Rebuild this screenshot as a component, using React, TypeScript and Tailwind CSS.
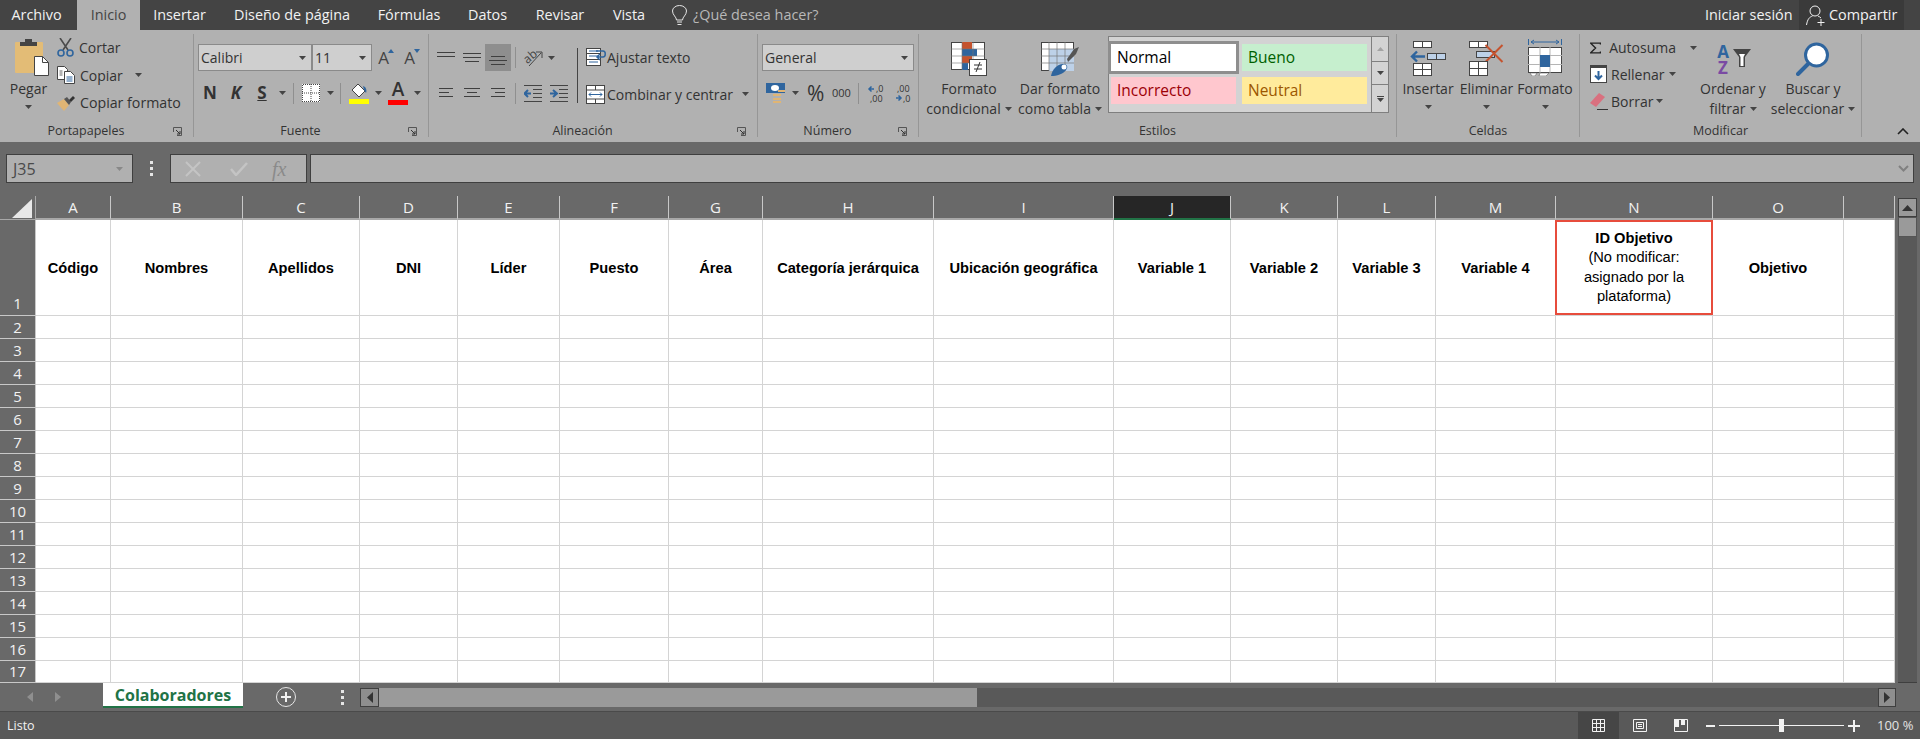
import type { ReactNode } from 'react'

const tabs = [
  ['Archivo', 'w-[77px] pr-[4px]'],
  ['Inicio', 'w-[63px] bg-[#b1b1b1] text-[#444]'],
  ['Insertar', 'w-[79px]'],
  ['Diseño de página', 'w-[146px]'],
  ['Fórmulas', 'w-[88px]'],
  ['Datos', 'w-[69px]'],
  ['Revisar', 'w-[76px]'],
  ['Vista', 'w-[62px]'],
]

const columns = ['A', 'B', 'C', 'D', 'E', 'F', 'G', 'H', 'I', 'J', 'K', 'L', 'M', 'N', 'O', '']
const titles = ['Código', 'Nombres', 'Apellidos', 'DNI', 'Líder', 'Puesto', 'Área', 'Categoría jerárquica', 'Ubicación geográfica', 'Variable 1', 'Variable 2', 'Variable 3', 'Variable 4', '', 'Objetivo', '']
const rows = [2, 3, 4, 5, 6, 7, 8, 9, 10, 11, 12, 13, 14, 15, 16, 17]

function Caret({ fill = '#444' }: { fill?: string }) {
  return (
    <svg width="7" height="4" viewBox="0 0 7 4" className="shrink-0">
      <path d="M0 0h7L3.5 4z" fill={fill} />
    </svg>
  )
}

function CaretBox({ w }: { w: string }) {
  return (
    <div className={`${w} flex justify-center`}>
      <Caret />
    </div>
  )
}

function Launcher() {
  return (
    <svg width="9" height="9" viewBox="0 0 9 9" className="shrink-0">
      <path d="M.5 5V.5H8.500V8.500H4" fill="none" stroke="#555" />
      <path d="M3 3l4 4M7 4v3H4" fill="none" stroke="#333" />
    </svg>
  )
}

function Sep() {
  return <div className="h-[21px] w-px shrink-0 bg-[#8f8f8f]" />
}

function Group({ w, label, launcher, children }: { w: string; label: string; launcher?: boolean; children: ReactNode }) {
  return (
    <div className={`${w} mt-1 flex h-[103px] shrink-0 flex-col border-r border-[#969696]`}>
      <div className="flex h-[92px]">{children}</div>
      <div className="flex h-[11px] items-center text-[12.500px] text-[#333]">
        <span className="flex-1 text-center">{label}</span>
        {launcher && (
          <span className="flex w-[21px] justify-start pl-[1px]">
            <Launcher />
          </span>
        )}
      </div>
    </div>
  )
}

function BigButton({ w, icon, lines, caretInline }: { w: string; icon: ReactNode; lines: string[]; caretInline?: boolean }) {
  return (
    <div className={`${w} flex shrink-0 flex-col items-center`}>
      <div className="mt-[5px] flex h-[37px] items-end justify-center">{icon}</div>
      <div className="mt-[3px] text-[14px] leading-[20px] text-[#333]">
        <div className="whitespace-nowrap text-center">{lines[0]}</div>
        {caretInline ? (
          <div className="flex items-center justify-center gap-[4px] whitespace-nowrap">
            {lines[1]}
            <Caret />
          </div>
        ) : (
          <div className="flex h-[16px] items-center justify-center">
            <Caret />
          </div>
        )}
      </div>
    </div>
  )
}

function SelectBox({ w, text }: { w: string; text: string }) {
  return (
    <div className={`${w} flex h-[27px] items-center justify-between border border-[#8a8a8a] bg-[#cfcfcf] pl-[2px] pr-[5px] text-[14px] text-[#333]`}>
      <span>{text}</span>
      <Caret />
    </div>
  )
}

function Lines({ ys, xs }: { ys: number[]; xs: [number, number][] }) {
  return (
    <svg width="18" height="16" viewBox="0 0 18 16">
      {ys.map((y, i) => (
        <path key={y} d={`M${xs[i][0]} ${y + 0.5}H${xs[i][1]}`} stroke="#3f3f3f" />
      ))}
    </svg>
  )
}

function Paste() {
  return (
    <svg width="34" height="38" viewBox="0 0 34 38">
      <rect x="0" y="4" width="28" height="31" rx="1" fill="#e3bc76" />
      <path d="M5 8V4h5V1h7v3h5v4z" fill="#444" />
      <path d="M19.500 18.500h8l6 6v13h-14z" fill="#fff" stroke="#444" />
      <path d="M27.500 18.500v6h6" fill="none" stroke="#444" />
    </svg>
  )
}

function Scissors() {
  return (
    <svg width="17" height="19" viewBox="0 0 17 19">
      <path d="M3 0l8 12M14 0L6 12" stroke="#4b4b4b" strokeWidth="1.600" fill="none" />
      <circle cx="4" cy="15" r="3" fill="none" stroke="#2f659e" strokeWidth="1.600" />
      <circle cx="13" cy="15" r="3" fill="none" stroke="#2f659e" strokeWidth="1.600" />
    </svg>
  )
}

function CopyIcon() {
  return (
    <svg width="18" height="18" viewBox="0 0 18 18">
      <path d="M.5.5h7l3 3v10H.5z" fill="#fff" stroke="#444" />
      <path d="M7.500 5.500h6l4 4v8h-10z" fill="#fff" stroke="#444" />
      <path d="M9.500 11h6M9.500 13h6M9.500 15h6" stroke="#2f659e" />
      <path d="M2.500 5h3M2.500 7h3M2.500 9h3" stroke="#666" />
    </svg>
  )
}

function Brush() {
  return (
    <svg width="18" height="16" viewBox="0 0 18 16">
      <path d="M0 8l7-4 5 6-5 6z" fill="#e0b574" />
      <path d="M7 4l3-2 4 5-2 3z" fill="#555" />
      <path d="M12 5l4-4 2 2-4 4z" fill="#333" />
    </svg>
  )
}

function BorderIcon() {
  return (
    <svg width="18" height="18" viewBox="0 0 18 18">
      <rect width="18" height="18" fill="#fff" />
      <path d="M.5 18V.5H18M17.500 0v18M0 17.500h18" fill="none" stroke="#444" strokeDasharray="1 1" />
      <path d="M9 0v18M0 9h18" stroke="#444" strokeDasharray="1 1" />
    </svg>
  )
}

function FillIcon() {
  return (
    <svg width="20" height="21" viewBox="0 0 20 21">
      <path d="M9 1l7 7-6 6-7-7z" fill="#fff" stroke="#444" />
      <path d="M14 3c3 1 4 4 3 7l-2-3z" fill="#2f659e" />
      <rect y="16" width="20" height="5" fill="#ffff00" />
    </svg>
  )
}

function FontColor() {
  return (
    <div className="flex w-[20px] flex-col items-center">
      <span className="h-[17px] text-[19px] font-semibold leading-[17px] text-[#333]">A</span>
      <span className="mt-[2px] h-[5px] w-[20px] bg-[#ff0000]" />
    </div>
  )
}

function Grow({ up }: { up?: boolean }) {
  return (
    <div className="flex w-[26px] items-start justify-center">
      <span className="text-[17px] leading-[20px] text-[#444]">A</span>
      <svg width="6" height="4" viewBox="0 0 6 4" className="-ml-[1px] mt-[1px]">
        <path d={up ? 'M0 4h6L3 0z' : 'M0 0h6L3 4z'} fill="#2f659e" />
      </svg>
    </div>
  )
}

function Orientation() {
  return (
    <svg width="19" height="19" viewBox="0 0 19 19" className="overflow-visible">
      <text x="0" y="13" fontSize="12" fill="#444" transform="rotate(-40 6 10)" fontFamily="Open Sans">ab</text>
      <path d="M5 18L17 5M12 4h6v6" fill="none" stroke="#444" />
    </svg>
  )
}

function Indent({ flip }: { flip?: boolean }) {
  return (
    <svg width="18" height="17" viewBox="0 0 18 17">
      {flip ? (
        <>
          <path d="M0 8.500h6M3 5l4 3.500L3 12" fill="none" stroke="#2f659e" strokeWidth="2" />
          <path d="M0 .5h18M9 4.500h9M9 8.500h9M9 12.500h9M0 16.500h18" stroke="#444" />
        </>
      ) : (
        <>
          <path d="M7 8.500H1M4 5L.5 8.500 4 12" fill="none" stroke="#2f659e" strokeWidth="2" />
          <path d="M0 .5h18M9 4.500h9M9 8.500h9M9 12.500h9M0 16.500h18" stroke="#444" />
        </>
      )}
    </svg>
  )
}

function Wrap() {
  return (
    <svg width="20" height="18" viewBox="0 0 20 18">
      <rect x=".5" y=".5" width="14" height="17" fill="#fff" stroke="#444" />
      <path d="M.5 5.500h14M.5 11.500h14" stroke="#444" />
      <path d="M3 3h9M3 8h9M3 14h9" stroke="#2f659e" />
      <path d="M10 3h7c3 0 3 6 0 6h-5M14 6l-3 3 3 3" fill="none" stroke="#2f659e" strokeWidth="1.500" />
    </svg>
  )
}

function Merge() {
  return (
    <svg width="19" height="19" viewBox="0 0 19 19">
      <rect x=".5" y=".5" width="18" height="18" fill="#fff" stroke="#444" />
      <path d="M.5 5h18M.5 14h18M9.500 0v5M9.500 14v5" stroke="#444" />
      <path d="M3 9.500h13M5 7.500l-2 2 2 2M14 7.500l2 2-2 2" fill="none" stroke="#2f659e" />
    </svg>
  )
}

function Currency() {
  return (
    <svg width="19" height="20" viewBox="0 0 19 20">
      <rect width="19" height="10" fill="#2f659e" />
      <ellipse cx="9" cy="5" rx="4" ry="3" fill="#fff" />
      <path d="M7 11h8v2H7zM7 15h8v2H7zM7 18h8v2H7zM12 7h7v2h-7z" fill="#e0b574" />
    </svg>
  )
}

function Decimal({ more }: { more?: boolean }) {
  return (
    <svg width="17" height="19" viewBox="0 0 17 19" className="overflow-visible">
      {more ? (
        <>
          <path d="M6 5H1M3.500 2.500L1 5l2.500 2.500" fill="none" stroke="#2f659e" strokeWidth="1.500" />
          <text x="8" y="8" fontSize="9" fill="#333" fontFamily="Open Sans">,0</text>
          <text x="2" y="18" fontSize="9" fill="#333" fontFamily="Open Sans">,00</text>
        </>
      ) : (
        <>
          <text x="2" y="8" fontSize="9" fill="#333" fontFamily="Open Sans">,00</text>
          <path d="M1 14h5M3.500 11.500L6 14l-2.500 2.500" fill="none" stroke="#2f659e" strokeWidth="1.500" />
          <text x="8" y="18" fontSize="9" fill="#333" fontFamily="Open Sans">,0</text>
        </>
      )}
    </svg>
  )
}

function CondFormat() {
  return (
    <svg width="36" height="34" viewBox="0 0 36 34">
      <rect x=".5" y=".5" width="33" height="27" fill="#fff" stroke="#444" />
      <path d="M11 0h10v7H11z" fill="#c5532e" />
      <path d="M11 7h15v7H11z" fill="#2f659e" />
      <path d="M11 14h10v7H11z" fill="#c5532e" />
      <path d="M11 21h6v7h-6z" fill="#2f659e" />
      <path d="M0 7h34M0 14h34M0 21h34M11 0v28M22 0v28" stroke="#777" strokeWidth=".6" />
      <rect x="18.500" y="17.500" width="17" height="16" fill="#fff" stroke="#444" />
      <path d="M23 23h8M23 27h8M29 20l-4 10" stroke="#333" fill="none" />
    </svg>
  )
}

function TableFormat() {
  return (
    <svg width="38" height="34" viewBox="0 0 38 34">
      <rect x=".5" y=".5" width="32" height="28" fill="#fff" stroke="#444" />
      <rect x="8" y="7" width="25" height="22" fill="#bdd1e8" />
      <path d="M0 7h33M0 14h33M0 21h33M8 0v29M16 0v29M24 0v29" stroke="#777" strokeWidth=".7" />
      <path d="M26 17l7-10 5-2-3 7-8 8z" fill="#555" />
      <path d="M10 34c1-6 6-12 12-12 3 0 6 2 3 6-3 4-9 6-15 6z" fill="#2f659e" />
      <circle cx="23" cy="25" r="2.500" fill="#fff" />
    </svg>
  )
}

function InsertCells() {
  return (
    <svg width="36" height="35" viewBox="0 0 36 35">
      <rect x="3.500" y=".5" width="18" height="6" fill="#fff" stroke="#444" />
      <path d="M12.500 0v6" stroke="#444" />
      <rect x="17.500" y="12.500" width="18" height="6" fill="#bdd1e8" stroke="#444" />
      <path d="M26.500 12v7" stroke="#444" />
      <path d="M15 15.500H2M7 10.500l-5 5 5 5" fill="none" stroke="#2f659e" strokeWidth="2.400" />
      <rect x="3.500" y="22.500" width="18" height="12" fill="#fff" stroke="#444" />
      <path d="M3 28.500h18M12.500 22v12" stroke="#444" />
    </svg>
  )
}

function DeleteCells() {
  return (
    <svg width="36" height="35" viewBox="0 0 36 35">
      <rect x=".5" y=".5" width="18" height="6" fill="#fff" stroke="#444" />
      <path d="M9.500 0v6" stroke="#444" />
      <rect x="7.500" y="10.500" width="18" height="6" fill="#bdd1e8" stroke="#444" />
      <path d="M17.500 4l17 17M34.500 4l-17 17" transform="translate(-1 0)" stroke="#c5532e" strokeWidth="2" />
      <rect x=".5" y="20.500" width="18" height="14" fill="#fff" stroke="#444" />
      <path d="M0 27.500h18M9.500 20v14" stroke="#444" />
    </svg>
  )
}

function FormatCells() {
  return (
    <svg width="34" height="37" viewBox="0 0 34 37">
      <path d="M.5 0v6M33.500 0v6" stroke="#2f659e" />
      <path d="M3 3h28M6 1L3 3l3 2M28 1l3 2-3 2" fill="none" stroke="#2f659e" />
      <rect x=".5" y="8.500" width="33" height="25" fill="#fff" stroke="#444" />
      <path d="M0 16.500h34M0 25.500h34M12 8v26M22 8v26" stroke="#b5b5b5" />
      <rect x="12" y="16" width="10" height="12" fill="#2f659e" />
      <path d="M2 34h7l-2 3H4zM12 34h9l-3 3h-7z" fill="#fff" stroke="#666" strokeWidth=".6" />
    </svg>
  )
}

function Sigma() {
  return (
    <svg width="16" height="16" viewBox="0 0 16 16">
      <path d="M15 3V1H1l7 7-7 7h14v-2" fill="none" stroke="#222" strokeWidth="2" />
    </svg>
  )
}

function FillDown() {
  return (
    <svg width="17" height="18" viewBox="0 0 17 18">
      <rect x=".5" y=".5" width="16" height="17" fill="#fff" stroke="#444" />
      <rect width="17" height="3" fill="#444" />
      <path d="M8.500 6v8M5 10.500l3.500 3.500 3.500-3.500" fill="none" stroke="#2f659e" strokeWidth="2" />
    </svg>
  )
}

function Eraser() {
  return (
    <svg width="18" height="18" viewBox="0 0 18 18">
      <path d="M0 11l9-10 6 4-9 10z" fill="#d9707f" />
      <path d="M7 17.500h11" stroke="#333" />
    </svg>
  )
}

function SortFilter() {
  return (
    <div className="flex h-[33px] items-end">
      <div className="flex w-[15px] flex-col items-center text-[17px] font-bold leading-[16px]">
        <span className="text-[#2f659e]">A</span>
        <span className="text-[#7a4aa3]">Z</span>
      </div>
      <svg width="18" height="18" viewBox="0 0 18 18" className="mb-[9px] ml-[2px]">
        <path d="M0 0h18l-6 8v10H6V8z" fill="#444" />
        <path d="M6 5h6l-1.500 3v9h-3V8z" fill="#fff" />
      </svg>
    </div>
  )
}

function Lens() {
  return (
    <svg width="34" height="34" viewBox="0 0 34 34">
      <circle cx="20.500" cy="13" r="11" fill="#fff" stroke="#2f659e" strokeWidth="3" />
      <path d="M12 22L2 32" stroke="#2f659e" strokeWidth="4" strokeLinecap="round" />
    </svg>
  )
}

function Corner() {
  return (
    <div className="flex h-full items-end justify-end border-r border-b border-[#a8a8a8] pb-[1px] pr-[3px]">
      <svg width="20" height="19" viewBox="0 0 20 19">
        <path d="M20 0v19H0z" fill="#e8e8e8" />
      </svg>
    </div>
  )
}

export default function App() {
  return (
    <div className="flex h-[739px] w-[1920px] flex-col overflow-hidden bg-[#696969] font-['Open_Sans',sans-serif] text-[14px]">
      {/* Title tabs */}
      <div className="flex h-[30px] shrink-0 items-stretch bg-[#444] text-[14.400px] text-[#f2f2f2]">
        {tabs.map(([name, cls]) => (
          <div key={name} className={`${cls} flex items-center justify-center`}>
            {name}
          </div>
        ))}
        <div className="ml-[12px] flex items-center gap-[6px] text-[#b8b8b8]">
          <svg width="15" height="21" viewBox="0 0 15 21">
            <path d="M4.500 15c0-3-4-5-4-9a7 5.500 0 0 1 14 0c0 4-4 6-4 9z" fill="none" stroke="#e6e6e6" />
            <path d="M5 17h5M5.500 19.500h4" stroke="#e6e6e6" />
          </svg>
          ¿Qué desea hacer?
        </div>
        <div className="ml-auto flex items-center pr-[16px]">
          <span className="w-[94px] whitespace-nowrap">Iniciar sesión</span>
          <div className="flex h-[30px] w-[105px] items-center gap-[3px] bg-[#3a3a3a] pl-[7px]">
            <svg width="20" height="21" viewBox="0 0 20 21">
              <circle cx="9" cy="6" r="5" fill="none" stroke="#f2f2f2" />
              <path d="M0.500 20c1-6 3-8 6-9M12 11c1 .5 2 1 3 2M15 14v7M11.500 17.500h7" fill="none" stroke="#f2f2f2" />
            </svg>
            Compartir
          </div>
        </div>
      </div>

      {/* Ribbon */}
      <div className="flex h-[112px] shrink-0 bg-[#b1b1b1] text-[#333]">
        <Group w="w-[194px]" label="Portapapeles" launcher>
          <div className="flex w-[57px] flex-col items-center">
            <div className="ml-[7px] mt-[4px]">
              <Paste />
            </div>
            <div className="mt-[3px] text-[14px] leading-[20px]">Pegar</div>
            <div className="mt-[6px]">
              <Caret />
            </div>
          </div>
          <div className="-mt-px flex flex-col">
            <div className="flex h-[28px] items-center gap-[5px]">
              <Scissors />
              Cortar
            </div>
            <div className="flex h-[28px] items-center gap-[5px]">
              <CopyIcon />
              Copiar
              <span className="ml-[7px]">
                <Caret />
              </span>
            </div>
            <div className="flex h-[28px] items-center gap-[5px]">
              <Brush />
              <span className="text-[14.200px]">Copiar formato</span>
            </div>
          </div>
        </Group>

        <Group w="w-[235px]" label="Fuente" launcher>
          <div className="flex flex-col pl-[4px]">
            <div className="mt-[10px] flex h-[27px] items-center">
              <SelectBox w="w-[114px]" text="Calibri" />
              <SelectBox w="w-[60px]" text="11" />
              <div className="ml-[1px]">
                <Grow up />
              </div>
              <Grow />
            </div>
            <div className="-ml-[1px] mt-[9px] flex h-[26px] items-center">
              <div className="w-[26px] text-center text-[17px] font-bold">N</div>
              <div className="w-[26px] text-center text-[17px] font-bold italic">K</div>
              <div className="w-[26px] text-center text-[17px] font-bold underline">S</div>
              <CaretBox w="w-[14px]" />
              <div className="ml-[4px]">
                <Sep />
              </div>
              <div className="ml-[8px]">
                <BorderIcon />
              </div>
              <CaretBox w="w-[20px]" />
              <Sep />
              <div className="ml-[8px]">
                <FillIcon />
              </div>
              <CaretBox w="w-[19px]" />
              <FontColor />
              <CaretBox w="w-[18px]" />
            </div>
          </div>
        </Group>

        <Group w="w-[329px]" label="Alineación" launcher>
          <div className="flex w-[148px] flex-col pl-[4px]">
            <div className="mt-[10px] flex h-[27px] items-center">
              <div className="flex w-[26px] justify-center">
                <Lines ys={[2, 6]} xs={[[0, 18], [0, 18]]} />
              </div>
              <div className="flex w-[26px] justify-center">
                <Lines ys={[3, 7, 11]} xs={[[0, 18], [0, 18], [2, 16]]} />
              </div>
              <div className="flex h-[27px] w-[26px] items-center justify-center bg-[#8e8e8e]">
                <Lines ys={[6, 10, 14]} xs={[[2, 16], [0, 18], [2, 16]]} />
              </div>
              <div className="ml-[4px]">
                <Sep />
              </div>
              <div className="ml-[8px]">
                <Orientation />
              </div>
              <CaretBox w="w-[16px]" />
            </div>
            <div className="mt-[9px] flex h-[26px] items-center">
              <div className="flex w-[26px] justify-center">
                <Lines ys={[3, 7, 11]} xs={[[2, 16], [2, 12], [2, 16]]} />
              </div>
              <div className="flex w-[26px] justify-center">
                <Lines ys={[3, 7, 11]} xs={[[1, 17], [4, 14], [1, 17]]} />
              </div>
              <div className="flex w-[26px] justify-center">
                <Lines ys={[3, 7, 11]} xs={[[2, 16], [6, 16], [2, 16]]} />
              </div>
              <div className="ml-[4px]">
                <Sep />
              </div>
              <div className="ml-[8px]">
                <Indent />
              </div>
              <div className="ml-[8px]">
                <Indent flip />
              </div>
            </div>
          </div>
          <div className="mt-[14px] h-[55px] w-px bg-[#444]" />
          <div className="flex flex-col pl-[8px]">
            <div className="mt-[9px] flex h-[28px] items-center gap-[1px]">
              <Wrap />
              Ajustar texto
            </div>
            <div className="mt-[9px] flex h-[28px] items-center gap-[2px]">
              <Merge />
              Combinar y centrar
              <span className="ml-[7px]">
                <Caret />
              </span>
            </div>
          </div>
        </Group>

        <Group w="w-[161px]" label="Número" launcher>
          <div className="flex flex-col pl-[4px]">
            <div className="mt-[10px]">
              <SelectBox w="w-[152px]" text="General" />
            </div>
            <div className="mt-[9px] flex h-[26px] items-center pl-[4px]">
              <Currency />
              <CaretBox w="w-[20px]" />
              <div className="ml-[2px] w-[16px] text-[21px] leading-none">%</div>
              <div className="ml-[9px] w-[18px] text-[11px]">000</div>
              <div className="ml-[8px]">
                <Sep />
              </div>
              <div className="ml-[9px]">
                <Decimal more />
              </div>
              <div className="ml-[10px]">
                <Decimal />
              </div>
            </div>
          </div>
        </Group>

        <Group w="w-[478px]" label="Estilos">
          <BigButton w="w-[100px]" icon={<CondFormat />} lines={['Formato', 'condicional']} caretInline />
          <BigButton w="w-[82px]" icon={<TableFormat />} lines={['Dar formato', 'como tabla']} caretInline />
          <div className="ml-[7px] mt-[2px] flex h-[77px] w-[281px] border border-[#7f7f7f] bg-[#d3d3d3]">
            <div className="grid flex-1 grid-cols-[125px_125px] grid-rows-[27px_27px] gap-x-[6px] gap-y-[6px] pl-[2px] pt-[7px] text-[15.500px]">
              <div className="flex items-center bg-white pl-[6px] text-black outline-[3px] outline-[#8e8e8e]">Normal</div>
              <div className="flex items-center bg-[#c6efce] pl-[6px] text-[#006100]">Bueno</div>
              <div className="flex items-center bg-[#ffc7ce] pl-[6px] text-[#9c0006]">Incorrecto</div>
              <div className="flex items-center bg-[#ffeb9c] pl-[6px] text-[#9c5700]">Neutral</div>
            </div>
            <div className="flex w-[17px] flex-col border-l border-[#7f7f7f]">
              <div className="flex h-[25px] items-center justify-center border-b border-[#7f7f7f]">
                <svg width="7" height="4" viewBox="0 0 7 4">
                  <path d="M0 4h7L3.500 0z" fill="#a3a3a3" />
                </svg>
              </div>
              <div className="flex h-[23px] items-center justify-center border-b border-[#7f7f7f]">
                <Caret />
              </div>
              <div className="flex flex-1 flex-col items-center justify-center gap-[1px]">
                <span className="h-px w-[7px] bg-[#444]" />
                <Caret />
              </div>
            </div>
          </div>
        </Group>

        <Group w="w-[183px]" label="Celdas">
          <BigButton w="w-[62px]" icon={<InsertCells />} lines={['Insertar']} />
          <BigButton w="w-[55px]" icon={<DeleteCells />} lines={['Eliminar']} />
          <BigButton w="w-[62px]" icon={<FormatCells />} lines={['Formato']} />
        </Group>

        <Group w="w-[282px]" label="Modificar">
          <div className="flex w-[117px] flex-col pl-[10px]">
            <div className="flex h-[27px] items-center gap-[8px]">
              <Sigma />
              Autosuma
              <span className="ml-[6px]">
                <Caret />
              </span>
            </div>
            <div className="flex h-[26px] items-center gap-[4px]">
              <FillDown />
              Rellenar
              <Caret />
            </div>
            <div className="flex h-[28px] items-center gap-[3px]">
              <Eraser />
              Borrar
              <Caret />
            </div>
          </div>
          <BigButton w="w-[72px]" icon={<SortFilter />} lines={['Ordenar y', 'filtrar']} caretInline />
          <BigButton w="w-[88px]" icon={<Lens />} lines={['Buscar y', 'seleccionar']} caretInline />
        </Group>

        <div className="flex flex-1 items-end justify-end pb-[7px] pr-[11px]">
          <svg width="12" height="7" viewBox="0 0 12 7">
            <path d="M1 6l5-5 5 5" fill="none" stroke="#222" strokeWidth="1.600" />
          </svg>
        </div>
      </div>

      {/* Formula bar */}
      <div className="flex h-[54px] shrink-0 items-start pl-[6px] pt-[12px]">
        <div className="flex h-[29px] w-[127px] items-center justify-between border border-[#3f3f3f] bg-[#b0b0b0] pl-[6px] pr-[9px] text-[16px] text-[#4a4a4a]">
          J35
          <Caret fill="#888" />
        </div>
        <div className="flex h-[29px] w-[37px] flex-col items-center justify-center gap-[3px]">
          <span className="h-[3px] w-[3px] bg-[#e6e6e6]" />
          <span className="h-[3px] w-[3px] bg-[#e6e6e6]" />
          <span className="h-[3px] w-[3px] bg-[#e6e6e6]" />
        </div>
        <div className="flex h-[29px] w-[137px] items-center border border-[#3f3f3f] bg-[#b0b0b0] pl-[14px]">
          <svg width="16" height="16" viewBox="0 0 16 16">
            <path d="M1 1l14 14M15 1L1 15" stroke="#c4c4c4" strokeWidth="2" />
          </svg>
          <svg width="18" height="14" viewBox="0 0 18 14" className="ml-[29px]">
            <path d="M1 7l5 6L17 1" fill="none" stroke="#c4c4c4" strokeWidth="2.500" />
          </svg>
          <span className="ml-[24px] font-['Liberation_Serif',serif] text-[20px] italic text-[#8a8a8a]">fx</span>
        </div>
        <div className="ml-[3px] flex h-[29px] w-[1604px] items-center justify-end border border-[#3f3f3f] bg-[#b0b0b0] pr-[4px]">
          <svg width="11" height="7" viewBox="0 0 11 7">
            <path d="M1 1l4.500 4.500L10 1" fill="none" stroke="#808080" strokeWidth="2" />
          </svg>
        </div>
      </div>

      {/* Sheet */}
      <div className="flex h-[487px] shrink-0">
        <div className="grid w-[1895px] shrink-0 grid-cols-[36px_75px_132px_117px_98px_102px_109px_94px_171px_180px_117px_107px_98px_120px_157px_131px_51px] grid-rows-[24px_96px_repeat(15,23px)_22px]">
          <Corner />
          {columns.map((col, i) => (
            <div
              key={i}
              className={
                col === 'J'
                  ? 'flex items-center justify-center border-r border-b-2 border-[#c8c8c8] border-b-[#217346] bg-[#262626] text-[15px] text-[#f2f2f2]'
                  : 'flex items-center justify-center border-r border-b-2 border-r-[#c8c8c8] border-b-[#a8a8a8] text-[15px] text-[#f2f2f2]'
              }
            >
              {col}
            </div>
          ))}

          <div className="flex items-end justify-center border-r border-b border-[#c8c8c8] text-[15px] leading-[23px] text-[#f2f2f2]">1</div>
          {titles.map((title, i) =>
            columns[i] === 'N' ? (
              <div key={i} className="-ml-px border-b border-[#d4d4d4] bg-white">
                <div className="flex h-full flex-col items-center justify-center border-2 border-[#e74c3c] text-center font-['Liberation_Sans',sans-serif] text-[14.670px] leading-[19.300px] text-black">
                  <span className="font-bold">ID Objetivo</span>
                  <span>(No modificar:</span>
                  <span>asignado por la</span>
                  <span>plataforma)</span>
                </div>
              </div>
            ) : (
              <div key={i} className="flex items-center justify-center border-r border-b border-[#d4d4d4] bg-white font-['Liberation_Sans',sans-serif] text-[14.670px] font-bold text-black">
                {title}
              </div>
            ),
          )}

          {rows.map((row) => (
            <div key={row} className="contents">
              <div className="flex items-center justify-center border-r border-b border-[#c8c8c8] text-[15px] text-[#f2f2f2]">{row}</div>
              {columns.map((_, i) => (
                <div key={i} className="border-r border-b border-[#d4d4d4] bg-white" />
              ))}
            </div>
          ))}
        </div>

        {/* Vertical scrollbar */}
        <div className="ml-[3px] flex w-[19px] flex-col pt-[2px]">
          <div className="flex h-[19px] items-center justify-center border border-[#3f3f3f] bg-[#9a9a9a]">
            <svg width="11" height="6" viewBox="0 0 11 6">
              <path d="M0 6h11L5.500 0z" fill="#333" />
            </svg>
          </div>
          <div className="h-[20px] border border-[#555] bg-[#9a9a9a]" />
          <div className="flex-1 border-b border-[#3f3f3f] bg-[#595959]" />
        </div>
      </div>

      {/* Sheet tabs */}
      <div className="flex h-[29px] shrink-0 border-b border-[#4a4a4a]">
        <div className="flex w-[103px] items-center pl-[27px] pb-[1px]">
          <svg width="6" height="10" viewBox="0 0 6 10">
            <path d="M6 0v10L0 5z" fill="#8f8f8f" />
          </svg>
          <svg width="6" height="10" viewBox="0 0 6 10" className="ml-[22px]">
            <path d="M0 0v10l6-5z" fill="#8f8f8f" />
          </svg>
        </div>
        <div className="flex h-[25px] w-[140px] items-center justify-center border-b-2 border-[#217346] bg-white text-[16px] font-bold text-[#217346]">
          Colaboradores
        </div>
        <div className="ml-[33px] mt-[4px] flex h-[20px] w-[20px] items-center justify-center rounded-full border border-[#e6e6e6]">
          <svg width="12" height="12" viewBox="0 0 12 12">
            <path d="M6 1v10M1 6h10" stroke="#f2f2f2" strokeWidth="2" />
          </svg>
        </div>
        <div className="ml-[44px] flex h-[28px] w-[5px] flex-col items-center justify-center gap-[3px]">
          <span className="h-[3px] w-[3px] bg-[#e6e6e6]" />
          <span className="h-[3px] w-[3px] bg-[#e6e6e6]" />
          <span className="h-[3px] w-[3px] bg-[#e6e6e6]" />
        </div>
        <div className="ml-[15px] mt-[5px] flex h-[19px] w-[1536px]">
          <div className="flex w-[19px] items-center justify-center border border-[#3f3f3f] bg-[#8e8e8e]">
            <svg width="6" height="11" viewBox="0 0 6 11">
              <path d="M6 0v11L0 5.500z" fill="#333" />
            </svg>
          </div>
          <div className="w-[598px] bg-[#9a9a9a]" />
          <div className="flex-1 bg-[#595959]" />
          <div className="flex w-[18px] items-center justify-center border border-[#3f3f3f] bg-[#8e8e8e]">
            <svg width="6" height="11" viewBox="0 0 6 11">
              <path d="M0 0v11l6-5.500z" fill="#333" />
            </svg>
          </div>
        </div>
      </div>

      {/* Status bar */}
      <div className="flex min-h-0 flex-1 items-center bg-[#595959] pl-[7px] text-[12.500px] text-[#f2f2f2]">
        <span className="pt-[1px]">Listo</span>
        <div className="ml-auto flex h-full items-center pr-[9px]">
          <div className="flex h-full w-[41px] items-center justify-center bg-[#464646]">
            <svg width="13" height="13" viewBox="0 0 13 13">
              <path d="M.5.5h12v12H.5zM4.500 0v13M8.500 0v13M0 4.500h13M0 8.500h13" fill="none" stroke="#f2f2f2" />
            </svg>
          </div>
          <div className="flex h-full w-[41px] items-center justify-center">
            <svg width="14" height="13" viewBox="0 0 14 13">
              <path d="M.5.5h13v12H.5zM3.500 3.500h7v6h-7zM5 5.500h4M5 7.500h4" fill="none" stroke="#f2f2f2" />
            </svg>
          </div>
          <div className="flex h-full w-[41px] items-center justify-center">
            <svg width="14" height="13" viewBox="0 0 14 13">
              <path d="M.5.5h13v12H.5z" fill="none" stroke="#f2f2f2" />
              <path d="M0 0h5v8H0zM7 0h4v6H7z" fill="#f2f2f2" />
            </svg>
          </div>
          <span className="ml-[5px] h-[2px] w-[9px] bg-[#f2f2f2]" />
          <div className="ml-[4px] flex h-px w-[125px] items-center bg-[#f2f2f2] pl-[60px]">
            <span className="h-[13px] w-[5px] bg-[#f2f2f2]" />
          </div>
          <svg width="12" height="12" viewBox="0 0 12 12" className="ml-[4px]">
            <path d="M6 0v12M0 6h12" stroke="#f2f2f2" strokeWidth="2" />
          </svg>
          <span className="ml-[17px] w-[34px] whitespace-nowrap text-[13px] text-[#e3e3e3]">100 %</span>
        </div>
      </div>
    </div>
  )
}
